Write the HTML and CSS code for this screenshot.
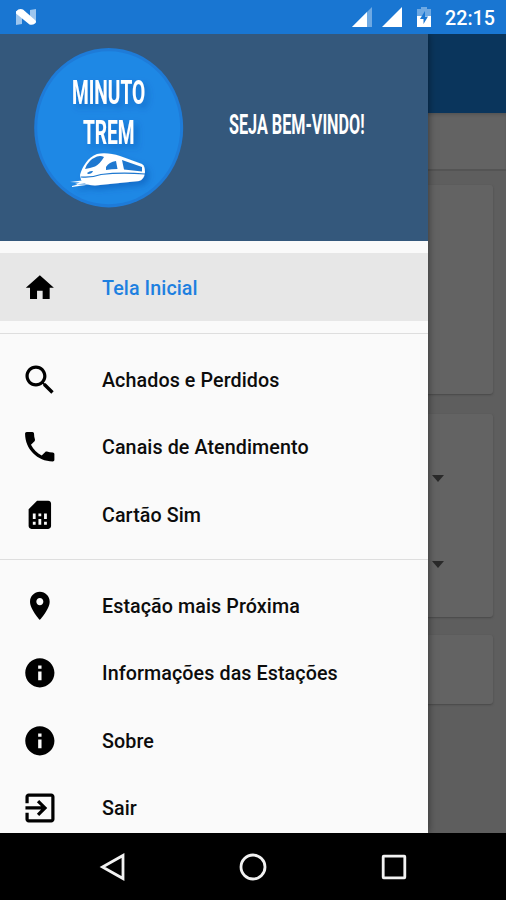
FILE: index.html
```html
<!DOCTYPE html>
<html lang="pt-BR">
<head>
  <meta charset="UTF-8">
  <meta name="viewport" content="width=device-width, initial-scale=1.0">
  <title>Minuto Trem</title>
  <link rel="stylesheet" href="styles.css">
</head>
<body>
  <div class="phone">
    <header class="status-bar">
      <svg class="n-logo" width="22" height="18" viewBox="0 0 22 18">
        <path d="M1 3h6v13l-6 1zM15 2l6-1v13l-6 1z" fill="#9cc5ee"/>
        <path d="M1 3.500Q4 0 8 1.500L20 12q2 2 0 3.500-2.500 2-5.500 1L1 5.500z" fill="#fff"/>
      </svg>
      <div class="status-icons">
        <svg width="20" height="20" viewBox="0 0 20 20">
          <path d="M0 20L20 0v20z" fill="#6ea9e3"/>
          <path d="M0 20L15 5v15z" fill="#fff"/>
        </svg>
        <svg width="20" height="20" viewBox="0 0 20 20">
          <path d="M0 20L20 0v20z" fill="#fff"/>
        </svg>
        <svg width="14" height="20" viewBox="0 0 14 20">
          <path d="M4 0h6v2h4v8H0V2h4z" fill="#6ea9e3"/>
          <path d="M0 9h14v11H0z" fill="#fff"/>
          <path d="M8 4L3 12h3.500v5L11 9.500H8z" fill="#1976d2"/>
        </svg>
        <span class="clock">22:15</span>
      </div>
    </header>

    <div class="screen">
      <main class="page">
        <div class="toolbar"></div>
        <div class="subbar"></div>
        <div class="cards">
          <div class="card card-banner"></div>
          <div class="card card-form">
            <span class="caret"></span>
            <span class="caret"></span>
          </div>
          <div class="card card-button"></div>
        </div>
      </main>

      <nav class="drawer">
        <div class="drawer-header">
          <svg width="428" height="207" viewBox="0 34 428 207">
            <defs>
              <filter id="shadow" x="-20%" y="-20%" width="150%" height="160%">
                <feDropShadow dx="4" dy="4" stdDeviation="3" flood-color="#0d47a1" flood-opacity="0.4"/>
              </filter>
            </defs>
            <ellipse cx="108.700" cy="127.700" rx="74.500" ry="79.700" fill="#1e7bd8"/>
            <ellipse cx="108.700" cy="127.700" rx="71.500" ry="76.500" fill="#1e88e5"/>
            <g filter="url(#shadow)" fill="#fff">
              <text class="logo-text" transform="translate(72 104) scale(0.600 1)" textLength="122" lengthAdjust="spacingAndGlyphs">MINUTO</text>
              <text class="logo-text" transform="translate(83 144) scale(0.600 1)" textLength="86" lengthAdjust="spacingAndGlyphs">TREM</text>
              <!-- train -->
              <path d="M80 175C82 167 88 157 97 154C104 152.500 112 153.500 120 156L142 164Q145 166 145 172Q144 180 139 181L95 185.500Q84 185 81 180Z"/>
              <path d="M70 182l12-1.500 6 2.500-12 1.500 13 0-17 2.500 0-1 6-1.500-3-.500 5-1.500z"/>
            </g>
            <g fill="#1e78d0">
              <path d="M85 169Q88 160 97 156.500Q101 155.500 104 157Q100 164 95 166.500Q90 168 85 169Z"/>
              <path d="M106 167q3-5 10-6l1.500 8q-6 0-11.500 1zM122 160l20 7v4.500l-18-2z"/>
              <path d="M87 173q3-2.500 6-2-1 3-5 3z"/>
            </g>
            <path d="M81 177Q91 178 101 174.500Q121 172 145 174" fill="none" stroke="#1e78d0" stroke-width="1.200"/>
            <text class="welcome" transform="translate(229 133.600) scale(0.600 1)" textLength="226" lengthAdjust="spacingAndGlyphs">SEJA BEM-VINDO!</text>
          </svg>
        </div>

        <ul class="menu">
          <li class="item active">
            <svg class="icon" viewBox="0 0 24 24"><path d="M10 20v-6h4v6h5v-8h3L12 3 2 12h3v8z"/></svg>
            <span>Tela Inicial</span>
          </li>
        </ul>
        <ul class="menu">
          <li class="item">
            <svg class="icon" viewBox="0 0 24 24"><path d="M15.500 14h-.790l-.280-.270C15.410 12.590 16 11.110 16 9.500 16 5.910 13.090 3 9.500 3S3 5.910 3 9.500 5.910 16 9.500 16c1.610 0 3.090-.590 4.230-1.570l.270.280v.790l5 4.990L20.490 19l-4.990-5zm-6 0C7.010 14 5 11.990 5 9.500S7.010 5 9.500 5 14 7.010 14 9.500 11.990 14 9.500 14z" transform="translate(-1.700 -1.700) scale(1.150)"/></svg>
            <span>Achados e Perdidos</span>
          </li>
          <li class="item">
            <svg class="icon" viewBox="0 0 24 24"><path d="M6.620 10.790c1.440 2.830 3.760 5.140 6.590 6.590l2.200-2.200c.270-.270.670-.360 1.020-.240 1.120.370 2.330.570 3.570.570.550 0 1 .450 1 1V20c0 .550-.450 1-1 1-9.390 0-17-7.610-17-17 0-.550.450-1 1-1h3.500c.550 0 1 .450 1 1 0 1.250.200 2.450.570 3.570.110.350.030.740-.250 1.020l-2.200 2.200z" transform="translate(-2 -2) scale(1.160)"/></svg>
            <span>Canais de Atendimento</span>
          </li>
          <li class="item">
            <svg class="icon" viewBox="0 0 24 24"><path d="M19.990 4c0-1.100-.890-2-1.990-2h-8L4 8v12c0 1.100.900 2 2 2h12.010c1.100 0 1.990-.900 1.990-2l-.010-16zM9 19H7v-2h2v2zm8 0h-2v-2h2v2zm-8-4H7v-4h2v4zm4 4h-2v-4h2v4zm0-6h-2v-2h2v2zm4 2h-2v-4h2v4z"/></svg>
            <span>Cartão Sim</span>
          </li>
        </ul>
        <ul class="menu">
          <li class="item">
            <svg class="icon" viewBox="0 0 24 24"><path d="M12 2C8.130 2 5 5.130 5 9c0 5.250 7 13 7 13s7-7.750 7-13c0-3.870-3.130-7-7-7zm0 9.500c-1.380 0-2.500-1.120-2.500-2.500s1.120-2.500 2.500-2.500 2.500 1.120 2.500 2.500-1.120 2.500-2.500 2.500z"/></svg>
            <span>Estação mais Próxima</span>
          </li>
          <li class="item">
            <svg class="icon" viewBox="0 0 24 24"><path d="M12 1.600C6.300 1.600 1.600 6.300 1.600 12S6.300 22.400 12 22.400 22.400 17.700 22.400 12 17.700 1.600 12 1.600zm1.200 15.600h-2.400v-6.200h2.400v6.200zm0-8.200h-2.400V6.800h2.400V9z"/></svg>
            <span>Informações das Estações</span>
          </li>
          <li class="item">
            <svg class="icon" viewBox="0 0 24 24"><path d="M12 1.600C6.300 1.600 1.600 6.300 1.600 12S6.300 22.400 12 22.400 22.400 17.700 22.400 12 17.700 1.600 12 1.600zm1.200 15.600h-2.400v-6.200h2.400v6.200zm0-8.200h-2.400V6.800h2.400V9z"/></svg>
            <span>Sobre</span>
          </li>
          <li class="item">
            <svg class="icon" viewBox="0 0 24 24"><path d="M10.090 15.590L11.500 17l5-5-5-5-1.410 1.410L12.670 11H3v2h9.670l-2.580 2.590zM19 3H5c-1.110 0-2 .900-2 2v4h2V5h14v14H5v-4H3v4c0 1.100.890 2 2 2h14c1.100 0 2-.900 2-2V5c0-1.100-.900-2-2-2z" transform="translate(-1.700 -1.700) scale(1.150)"/></svg>
            <span>Sair</span>
          </li>
        </ul>
      </nav>
    </div>

    <footer class="nav-bar">
      <svg width="28" height="28" viewBox="0 0 28 28"><path d="M24 2.500v23L3.500 14z"/></svg>
      <svg width="28" height="28" viewBox="0 0 28 28"><circle cx="14" cy="14" r="12"/></svg>
      <svg width="28" height="28" viewBox="0 0 28 28"><rect x="3.200" y="3.200" width="21.600" height="21.600" rx="0.500"/></svg>
    </footer>
  </div>
</body>
</html>
```

FILE: styles.css
```css
* {
  box-sizing: border-box;
}

body {
  margin: 0;
  font-family: Roboto, "Liberation Sans", sans-serif;
  background-color: #000;
}

svg {
  display: block;
}

.phone {
  display: flex;
  flex-direction: column;
  width: 506px;
  height: 900px;
  overflow: hidden;
}

/* status bar */
.status-bar {
  display: flex;
  justify-content: space-between;
  height: 34px;
  padding: 7px 10px 0 15px;
  background-color: #1976d2;
}

.n-logo {
  margin-top: 1px;
}

.status-icons {
  display: flex;
  gap: 10px;
}

.status-icons svg:nth-child(3) {
  margin-left: 5px;
}

.clock {
  margin-left: 4px;
  width: 51px;
  color: #fff;
  font-size: 19.7px;
  font-weight: 500;
  line-height: 23px;
  white-space: nowrap;
}

/* dimmed page with the drawer over it */
.screen {
  position: relative;
  height: 799px;
  overflow: hidden;
}

.page {
  height: 100%;
  background-color: #5e5e5e;
}

.toolbar {
  height: 79px;
  background-color: #0a355c;
}

.subbar {
  height: 58px;
  background-color: #636363;
  border-bottom: 2px solid #545454;
  box-shadow: inset 0 3px 3px -1px #555;
}

.cards {
  display: flex;
  flex-direction: column;
  gap: 20px;
  padding: 14px 13px;
}

.card {
  background-color: #636363;
  border-radius: 3px;
  box-shadow: 0 1px 2px #484848;
}

.card-banner {
  height: 209px;
}

.card-form {
  display: flex;
  flex-direction: column;
  gap: 79px;
  height: 203px;
  padding: 61px 49px 0;
}

.card-button {
  height: 69px;
  margin-top: -2px;
}

.caret {
  align-self: flex-end;
  border: 6.5px solid transparent;
  border-top: 7px solid #2a2a2a;
  border-bottom: none;
}

.drawer {
  position: absolute;
  top: 0;
  left: 0;
  width: 428px;
  height: 100%;
  overflow: hidden;
  background-color: #fafafa;
  box-shadow: 0 0 8px rgba(0, 0, 0, 0.5);
}

.drawer-header {
  height: 207px;
  background-color: #34587c;
}

.logo-text {
  font-size: 34px;
  font-weight: 700;
}

.welcome {
  fill: #fff;
  font-size: 28.5px;
  font-weight: 700;
}

.menu {
  margin: 0;
  padding: 12px 0;
  list-style: none;
}

.menu + .menu {
  padding: 11.3px 0;
  border-top: 1px solid #dedede;
}

.item {
  display: flex;
  align-items: center;
  gap: 45.7px;
  height: 67.5px;
  padding: 2px 0 0 22.6px;
  color: #0c0c0c;
  font-size: 19.7px;
  font-weight: 500;
  letter-spacing: 0.09px;
}

.item span {
  padding-top: 1px;
}

.item.active {
  background-color: #e7e7e7;
  color: #1e80e0;
}

.icon {
  width: 33.7px;
  height: 33.7px;
  fill: #000;
}

/* android buttons */
.nav-bar {
  display: flex;
  justify-content: center;
  gap: 112.5px;
  height: 67px;
  padding-top: 20px;
  background-color: #000;
}

.nav-bar svg {
  fill: none;
  stroke: #f2f2f2;
  stroke-width: 2.8;
}
```
